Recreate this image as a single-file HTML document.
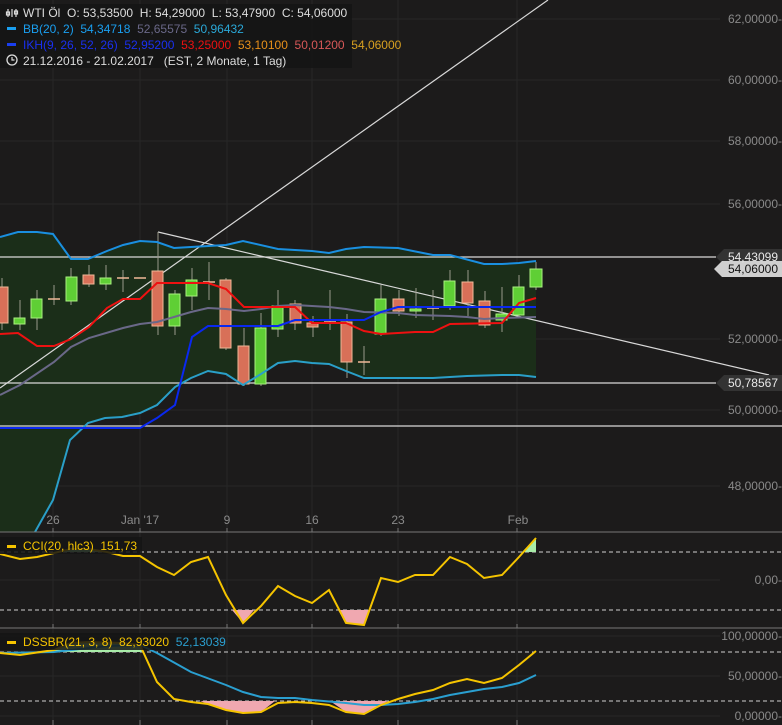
<!DOCTYPE html>
<html><head><meta charset="utf-8"><style>
html,body{margin:0;padding:0;background:#1c1b1b;}
svg{display:block;font-family:"Liberation Sans",sans-serif;}
svg text{white-space:pre;}
</style></head><body>
<svg width="782" height="725" viewBox="0 0 782 725" xmlns="http://www.w3.org/2000/svg" xml:space="preserve">
<rect width="782" height="725" fill="#1c1b1b"/>
<g stroke="#272727" stroke-width="1">
<line x1="53" y1="0" x2="53" y2="725"/><line x1="140" y1="0" x2="140" y2="725"/><line x1="227" y1="0" x2="227" y2="725"/><line x1="312" y1="0" x2="312" y2="725"/><line x1="398" y1="0" x2="398" y2="725"/><line x1="517" y1="0" x2="517" y2="725"/>
<line x1="0" y1="19" x2="720" y2="19"/><line x1="0" y1="80" x2="720" y2="80"/><line x1="0" y1="141" x2="720" y2="141"/><line x1="0" y1="204" x2="720" y2="204"/><line x1="0" y1="339" x2="720" y2="339"/><line x1="0" y1="410" x2="720" y2="410"/><line x1="0" y1="486" x2="720" y2="486"/>
<line x1="0" y1="580" x2="720" y2="580"/><line x1="0" y1="636" x2="720" y2="636"/><line x1="0" y1="676" x2="720" y2="676"/><line x1="0" y1="716" x2="720" y2="716"/>
</g>
<polygon fill="#1b2e19" points="0,237 18,232 37,232 53,234 71,259 88,259 107,251 123,245 140,241 157,242 174,248 191,247 226,245 243,241 278,249 312,251 329,253 346,249 364,247 398,248 433,255 450,255 484,264 502,264 519,263 536,261 536,377 519,375 502,375 467,376 433,378 364,378 346,371 329,364 312,363 295,361 278,363 261,374 243,385 226,374 208,371 191,378 175,387 157,405 140,413 122,417 105,418 88,423 70,440 53,500 35,532 0,532"/>
<g stroke="#d8d8d8" stroke-width="1.2">
<line x1="0" y1="257" x2="716" y2="257"/><line x1="0" y1="383" x2="716" y2="383"/><line x1="0" y1="426" x2="782" y2="426"/>
<line x1="0" y1="388" x2="548" y2="0"/>
<line x1="158" y1="232" x2="769" y2="375"/>
</g>
<g stroke-width="1">
<g stroke="#9a9a8a">
<line x1="2" y1="278" x2="2" y2="330"/><line x1="20" y1="300" x2="20" y2="330"/><line x1="37" y1="290" x2="37" y2="330"/><line x1="54" y1="285" x2="54" y2="305"/><line x1="71" y1="268" x2="71" y2="305"/><line x1="89" y1="265" x2="89" y2="287"/><line x1="106" y1="265" x2="106" y2="290"/><line x1="123" y1="270" x2="123" y2="292"/><line x1="158" y1="232" x2="158" y2="335"/><line x1="175" y1="290" x2="175" y2="335"/><line x1="192" y1="268" x2="192" y2="310"/><line x1="209" y1="262" x2="209" y2="300"/><line x1="226" y1="278" x2="226" y2="350"/><line x1="244" y1="328" x2="244" y2="386"/><line x1="261" y1="313" x2="261" y2="386"/><line x1="278" y1="290" x2="278" y2="337"/><line x1="295" y1="300" x2="295" y2="330"/><line x1="313" y1="316" x2="313" y2="337"/><line x1="330" y1="290" x2="330" y2="330"/><line x1="347" y1="314" x2="347" y2="378"/><line x1="364" y1="346" x2="364" y2="375"/><line x1="381" y1="285" x2="381" y2="336"/><line x1="399" y1="290" x2="399" y2="316"/><line x1="416" y1="288" x2="416" y2="318"/><line x1="433" y1="290" x2="433" y2="320"/><line x1="450" y1="270" x2="450" y2="310"/><line x1="468" y1="270" x2="468" y2="316"/><line x1="485" y1="291" x2="485" y2="328"/><line x1="502" y1="287" x2="502" y2="332"/><line x1="519" y1="275" x2="519" y2="317"/><line x1="536" y1="262" x2="536" y2="290"/>
</g>
<g fill="#d87058" stroke="#f0b898">
<rect x="-4" y="287" width="12" height="36"/><rect x="83" y="275" width="11" height="9"/><rect x="152" y="271" width="11" height="55"/><rect x="220" y="280" width="11" height="68"/><rect x="238" y="346" width="11" height="38"/><rect x="290" y="304" width="11" height="19"/><rect x="307" y="323" width="11" height="4"/><rect x="341" y="322" width="11" height="40"/><rect x="393" y="299" width="11" height="12"/><rect x="462" y="282" width="11" height="21"/><rect x="479" y="301" width="11" height="24"/>
</g>
<g fill="#5fcf35" stroke="#a8f080">
<rect x="14" y="318" width="11" height="6"/><rect x="31" y="299" width="11" height="19"/><rect x="66" y="277" width="11" height="24"/><rect x="100" y="278" width="11" height="6"/><rect x="169" y="294" width="11" height="32"/><rect x="186" y="280" width="11" height="16"/><rect x="255" y="328" width="11" height="56"/><rect x="272" y="306" width="11" height="23"/><rect x="375" y="299" width="11" height="35"/><rect x="410" y="309" width="11" height="2"/><rect x="444" y="281" width="11" height="25"/><rect x="496" y="314" width="11" height="6"/><rect x="513" y="287" width="11" height="28"/><rect x="530" y="269" width="12" height="18"/>
</g>
<g stroke="#f0b898" stroke-width="1.5">
<line x1="48" y1="299" x2="60" y2="299"/><line x1="117" y1="278" x2="129" y2="278"/><line x1="134" y1="278" x2="146" y2="278"/><line x1="203" y1="282" x2="215" y2="282"/><line x1="324" y1="322" x2="336" y2="322"/><line x1="358" y1="362" x2="370" y2="362"/><line x1="427" y1="308" x2="439" y2="308"/>
</g>
</g>
<g fill="none" stroke-width="2">
<polyline stroke="#1a8fe0" points="0,237 18,232 37,232 53,234 71,259 88,259 107,251 123,245 140,241 157,242 174,248 191,247 226,245 243,241 278,249 312,251 329,253 346,249 364,247 398,248 433,255 450,255 484,264 502,264 519,263 536,261"/>
<polyline stroke="#2a9fc8" points="35,532 53,500 70,440 88,423 105,418 122,417 140,413 157,405 175,387 191,378 208,371 226,374 243,385 261,374 278,363 295,361 312,363 329,364 346,371 364,378 433,378 467,376 502,375 519,375 536,377"/>
<polyline stroke="#6a6888" points="0,395 20,385 54,362 71,347 89,338 123,328 140,324 157,322 191,312 208,308 226,309 244,311 261,309 278,306 295,305 329,307 346,309 364,312 398,313 415,315 450,316 467,317 484,319 502,318 536,317"/>
<polyline stroke="#ee1111" points="0,334 18,333 37,346 54,346 71,339 89,327 107,308 123,299 140,299 157,283 208,283 226,289 244,307 295,307 312,323 346,323 364,331 381,334 415,332 433,332 450,324 502,323 519,303 536,298"/>
<polyline stroke="#0a28f0" points="0,428 140,428 157,418 175,405 192,337 208,326 278,326 295,320 364,320 381,312 398,307 536,307"/>
</g>
<g fill="#8a8a8a" font-size="12" text-anchor="end">
<text x="782" y="23">62,00000-</text><text x="782" y="84">60,00000-</text><text x="782" y="145">58,00000-</text><text x="782" y="208">56,00000-</text><text x="782" y="343">52,00000-</text><text x="782" y="414">50,00000-</text><text x="782" y="490">48,00000-</text>
<text x="782" y="584">0,00-</text><text x="782" y="640">100,00000-</text><text x="782" y="680">50,00000-</text><text x="782" y="720">0,00000-</text>
</g>
<polygon points="716,257 724,249 782,249 782,265 724,265" fill="#333"/>
<polygon points="714,269 722,261 782,261 782,277 722,277" fill="#cfcfcf"/>
<polygon points="716,383 724,375 782,375 782,391 724,391" fill="#333"/>
<g font-size="12" text-anchor="end">
<text x="778" y="261" fill="#e8e8e8">54,43099</text>
<text x="778" y="273" fill="#111">54,06000</text>
<text x="778" y="387" fill="#e8e8e8">50,78567</text>
</g>
<g fill="#8a8a8a" font-size="12" text-anchor="middle">
<text x="53" y="524">26</text><text x="140" y="524">Jan '17</text><text x="227" y="524">9</text><text x="312" y="524">16</text><text x="398" y="524">23</text><text x="518" y="524">Feb</text>
</g>
<line x1="0" y1="532" x2="782" y2="532" stroke="#777" stroke-width="1"/>
<line x1="0" y1="628" x2="782" y2="628" stroke="#777" stroke-width="1"/>
<g stroke="#777"><line x1="53" y1="528" x2="53" y2="532"/><line x1="140" y1="528" x2="140" y2="532"/><line x1="227" y1="528" x2="227" y2="532"/><line x1="312" y1="528" x2="312" y2="532"/><line x1="398" y1="528" x2="398" y2="532"/><line x1="517" y1="528" x2="517" y2="532"/>
<line x1="53" y1="624" x2="53" y2="628"/><line x1="140" y1="624" x2="140" y2="628"/><line x1="227" y1="624" x2="227" y2="628"/><line x1="312" y1="624" x2="312" y2="628"/><line x1="398" y1="624" x2="398" y2="628"/><line x1="517" y1="624" x2="517" y2="628"/>
<line x1="53" y1="720" x2="53" y2="725"/><line x1="140" y1="720" x2="140" y2="725"/><line x1="227" y1="720" x2="227" y2="725"/><line x1="312" y1="720" x2="312" y2="725"/><line x1="398" y1="720" x2="398" y2="725"/><line x1="517" y1="720" x2="517" y2="725"/></g>
<g stroke="#cfcfcf" stroke-dasharray="4,3" stroke-width="1"><line x1="0" y1="552" x2="782" y2="552"/><line x1="0" y1="610" x2="782" y2="610"/><line x1="0" y1="652" x2="782" y2="652"/><line x1="0" y1="701" x2="782" y2="701"/></g>
<polygon fill="#f0a8b0" points="232,610 243,623 254,610"/>
<polygon fill="#f0a8b0" points="338,610 346,623 364,625 369,610"/>
<polygon fill="#a8eca8" points="522,552 536,538 536,552"/>
<polygon fill="#a8eca8" points="58,552 71,549 89,549 107,552"/>
<polyline fill="none" stroke="#f5c400" stroke-width="2" points="0,554 20,559 37,557 54,553 71,549 89,549 107,552 123,556 140,556 157,567 174,575 191,562 208,557 226,595 243,623 261,606 278,586 295,596 312,603 329,590 346,623 364,625 381,578 398,582 415,575 433,575 450,557 467,564 484,578 502,575 519,557 536,538"/>
<polygon fill="#a8eca8" points="30,652 54,650 71,643 89,642 123,643 140,645 142,652"/>
<polygon fill="#f0a8b0" points="200,701 208,704 226,710 243,713 261,712 275,701"/>
<polygon fill="#f0a8b0" points="330,701 346,712 364,714 381,705 388,701"/>
<polyline fill="none" stroke="#2a9fd0" stroke-width="2" points="0,653 54,652 89,648 107,646 140,645 157,653 191,672 226,685 243,692 261,697 278,698 295,698 312,700 346,703 364,705 381,705 398,704 415,702 433,699 450,695 467,692 484,689 502,687 519,683 536,675"/>
<polyline fill="none" stroke="#f5c400" stroke-width="2" points="0,653 20,655 54,650 71,643 89,642 123,643 140,645 157,682 174,699 191,702 208,704 226,710 243,713 261,712 278,703 295,702 312,703 329,705 346,712 364,714 381,705 398,699 415,694 433,690 450,683 467,679 484,683 502,678 519,665 536,651"/>
<rect x="0" y="4" width="352" height="64" fill="#141414" opacity="0.85"/>
<rect x="0" y="537" width="142" height="17" fill="#141414" opacity="0.85"/>
<rect x="0" y="633" width="218" height="17" fill="#141414" opacity="0.85"/>
<g font-size="12">
<g stroke="#ddd" stroke-width="1.2" fill="none"><line x1="8" y1="9" x2="8" y2="17"/><line x1="12" y1="9" x2="12" y2="17"/><line x1="16" y1="9" x2="16" y2="17"/><rect x="6.5" y="12" width="3" height="3"/><rect x="14.5" y="11" width="3" height="3"/></g>
<text x="23" y="17" fill="#ddd">WTI Öl  O: 53,53500  H: 54,29000  L: 53,47900  C: 54,06000</text>
<rect x="7" y="27" width="9" height="3" fill="#1a9ff0"/>
<text x="23" y="33"><tspan fill="#1a9ff0">BB(20, 2)  54,34718  </tspan><tspan fill="#6a6888">52,65575  </tspan><tspan fill="#2aa8d8">50,96432</tspan></text>
<rect x="7" y="43" width="9" height="3" fill="#1a3ff0"/>
<text x="23" y="49"><tspan fill="#1a30f0">IKH(9, 26, 52, 26)  52,95200  </tspan><tspan fill="#ee1111">53,25000  </tspan><tspan fill="#e8901a">53,10100  </tspan><tspan fill="#d85858">50,01200  </tspan><tspan fill="#d8a020">54,06000</tspan></text>
<circle cx="12" cy="60" r="5" fill="none" stroke="#ddd" stroke-width="1.3"/><path d="M12 57 V60 H14.5" fill="none" stroke="#ddd" stroke-width="1.2"/>
<text x="23" y="65" fill="#ddd">21.12.2016 - 21.02.2017   (EST, 2 Monate, 1 Tag)</text>
<rect x="7" y="545" width="9" height="3" fill="#f5c400"/>
<text x="23" y="550" fill="#f5c400">CCI(20, hlc3)  151,73</text>
<rect x="7" y="641" width="9" height="3" fill="#f5c400"/>
<text x="23" y="646"><tspan fill="#f5c400">DSSBR(21, 3, 8)  82,93020  </tspan><tspan fill="#2a9fd0">52,13039</tspan></text>
</g>
</svg>
</body></html>
